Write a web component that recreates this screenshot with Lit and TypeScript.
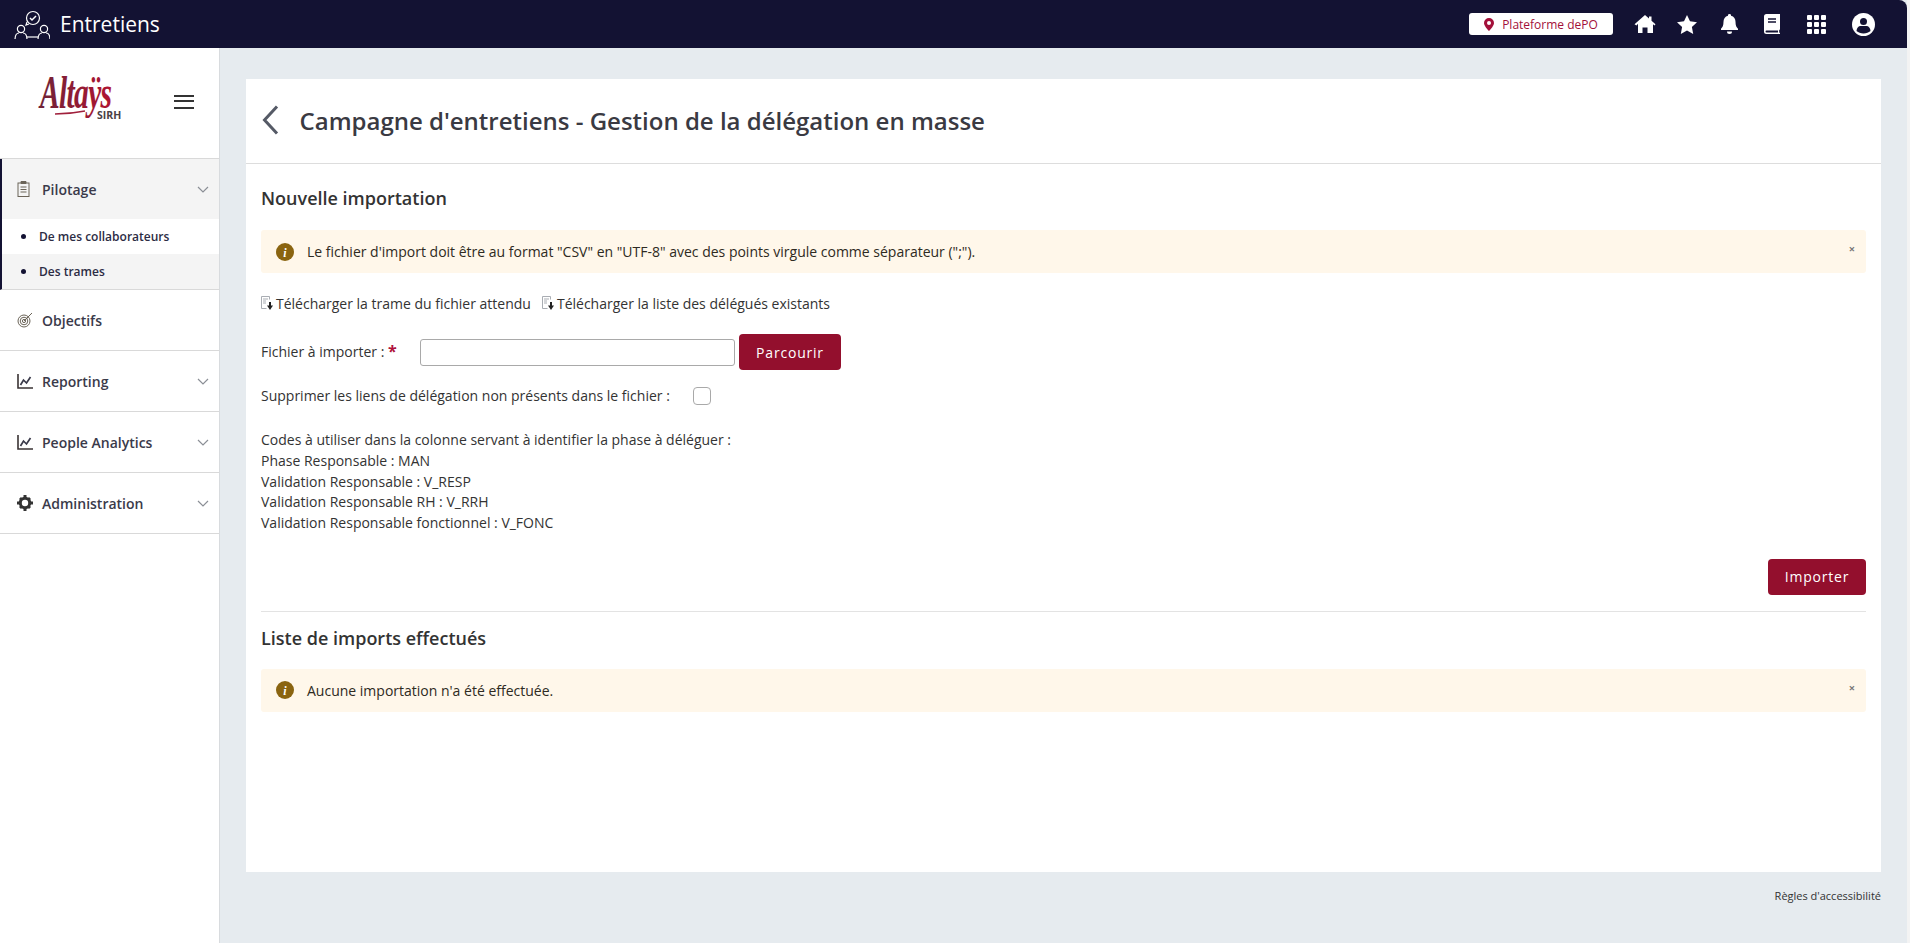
import { LitElement, html, css, svg } from "lit";
import { customElement } from "lit/decorators.js";

const chevron = html`<svg class="chev" viewBox="0 0 12 7" width="12" height="7"><path d="M1 1l5 5 5-5" fill="none" stroke="#8b8f96" stroke-width="1.2"/></svg>`;
const chart = html`<svg class="ico" viewBox="0 0 16 16" width="16" height="16"><path d="M1 1v14h15" fill="none" stroke="#3a3334" stroke-width="1.6"/><path d="M3.500 12l3-5 3 3 4-6" fill="none" stroke="#3a3a4a" stroke-width="1.700"/></svg>`;
const docDown = html`<svg class="dl" viewBox="0 0 12 14" width="12" height="14"><path d="M.5.5h8v3M.5.5v12h5" fill="none" stroke="#a9adb3"/><path d="M2 3h5M2 5h3M2 7h3" stroke="#a9adb3"/><path d="M9 6v5" stroke="#222" stroke-width="2"/><path d="M6 9.500h6L9 14z" fill="#222"/></svg>`;
const info = html`<svg class="info" viewBox="0 0 18 18" width="18" height="18"><circle cx="9" cy="9" r="9" fill="#8a6410"/><text x="9" y="13.500" text-anchor="middle" class="i">i</text></svg>`;

@customElement("app-root")
export class AppRoot extends LitElement {
  static styles = css`
    :host { display: flex; width: 1910px; height: 943px; overflow: hidden; background: #e6ebef; font-family: "Open Sans", sans-serif; color: #333; font-size: 14px; }
    .page { width: 1907px; flex: none; }
    .strip { flex: 1; background: #f3f3f3; }
    .top { height: 48px; background: #131233; border-top-right-radius: 8px; display: flex; align-items: center; padding: 0 0 0 14px; box-sizing: border-box; color: #fff; }
    .top .brand { font-size: 21px; margin-left: 10px; flex: 1; line-height: 48px; }
    .chip { width: 144px; height: 22px; background: #fff; border-radius: 3px; color: #a3103a; font-size: 12px; display: flex; align-items: center; justify-content: center; gap: 8px; margin-right: 11px; }
    .ticons { display: flex; align-items: center; margin-right: 20px; }
    .ticons span { display: flex; width: 42px; justify-content: center; }
    .ticons span.w43 { width: 43px; }
    .ticons span.w46 { width: 46px; }
    .ticons span.w48 { width: 48px; }
    .main { display: flex; height: 895px; }
    .side { width: 219px; background: #fff; border-right: 1px solid #d8dbde; flex: none; }
    .logo { height: 111px; box-sizing: border-box; border-bottom: 1px solid #d9d9d9; position: relative; }
    .lg { position: absolute; left: 38px; top: 8px; }
    .burger { position: absolute; left: 174px; top: 47px; width: 20px; height: 14px; border-top: 2px solid #333; border-bottom: 2px solid #333; box-sizing: border-box; }
    .burger::after { content: ""; display: block; height: 2px; background: #333; margin-top: 3px; }
    .group { border-bottom: 1px solid #d9d9d9; border-left: 2px solid #131233; }
    .item { height: 60px; display: flex; align-items: center; box-sizing: border-box; padding-left: 17px; padding-right: 10px; font-weight: 600; font-size: 14px; color: #3a3a4a; }
    .item.rule { border-bottom: 1px solid #d9d9d9; height: 61px; }
    .group .item { background: #f4f4f4; padding-left: 15px; }
    .item .lab { flex: 1; }
    .item .slot { width: 25px; display: flex; }
    .sub { height: 35px; display: flex; align-items: center; padding-left: 19px; font-size: 12px; font-weight: 600; color: #2c2c44; gap: 13px; }
    .sub i { width: 5px; height: 5px; border-radius: 50%; background: #131233; }
    .sub.alt2 { background: #f4f4f4; }
    .content { flex: 1; padding: 31px 26px 0 26px; min-width: 0; }
    .card { height: 793px; background: #fff; }
    .head { height: 85px; border-bottom: 1px solid #ddd; box-sizing: border-box; display: flex; align-items: center; padding-left: 16px; padding-bottom: 2px; }
    .head h1 { margin: 0 0 0 20.5px; font-size: 24px; font-weight: 600; color: #3a3a42; }
    .body { padding: 21px 15px 0; }
    h2 { margin: 0; font-size: 18px; font-weight: 600; color: #333; line-height: 26px; }
    .alert { height: 43px; background: #fff7ea; border-radius: 3px; display: flex; align-items: center; padding: 0 11px 0 15px; color: #2e2a22; margin-top: 19px; }
    .alert .msg { flex: 1; margin-left: 13px; }
    .close { font-size: 11px; color: #777; font-weight: 700; margin-top: -6px; line-height: 1; }
    .links { display: flex; margin-top: 20px; gap: 11px; height: 20px; align-items: center; }
    .links a { display: flex; align-items: center; color: #333; }
    .dl { margin-right: 3px; }
    .row { display: flex; align-items: center; margin-top: 21px; }
    .row label { width: 159px; position: relative; top: -1px; }
    .req { color: #b0123b; font-weight: 700; font-size: 16px; }
    .input { width: 315px; height: 27px; box-sizing: border-box; border: 1px solid #a9a9a9; border-radius: 3px; background: #fff; }
    .btn { background: #930f2d; color: #fff; border-radius: 4px; height: 36px; display: flex; align-items: center; justify-content: center; font-weight: 500; letter-spacing: .8px; }
    .browse { width: 102px; margin-left: 4px; }
    .chk-row { display: flex; align-items: center; margin-top: 16px; }
    .chk { width: 18px; height: 18px; box-sizing: border-box; border: 1px solid #a9a9a9; border-radius: 4px; margin-left: 23px; }
    .codes { margin-top: 25px; line-height: 20.8px; }
    .actions { display: flex; justify-content: flex-end; margin-top: 25px; }
    .imp { width: 98px; }
    .sep { border-top: 1px solid #e3e3e3; margin-top: 16px; }
    .sep + h2 { margin-top: 13px; }
    .alert.two { margin-top: 18px; }
    .foot { text-align: right; font-size: 11px; color: #333; margin-top: 16px; line-height: 15px; }
    svg text.i { font: italic 700 12px "Liberation Serif", serif; fill: #fff; }
    svg text.wm { font: italic 700 46px "Liberation Serif", serif; letter-spacing: -1px; }
    svg text.sr { font: 700 10.5px "Open Sans", sans-serif; fill: #4a4146; }
  `;

  render() {
    return html`
      <div class="page">
      <div class="top">
        <svg width="36" height="30" viewBox="0 0 36 30" fill="none" stroke="#fff" stroke-width="1.2">
          <circle cx="19" cy="9" r="6.500"/><path d="M13 13l-1 3 3-1"/><path d="M16 9l2 2 4-4" stroke-width="1.500"/>
          <circle cx="7" cy="20" r="3.600"/><path d="M1 31c0-5 2-7 4-7M13 31c0-5-2-7-4-7"/>
          <circle cx="30" cy="20" r="3.600"/><path d="M24 31c0-5 2-7 4-7M36 31c0-5-2-7-4-7"/><path d="M13 28h11"/>
        </svg>
        <div class="brand">Entretiens</div>
        <div class="chip">
          <svg width="10" height="13" viewBox="0 0 10 13"><path fill-rule="evenodd" fill="#a3103a" d="M5 0a5 5 0 0 1 5 5c0 2.500-3 6-5 8-2-2-5-5.500-5-8a5 5 0 0 1 5-5zm0 3a2 2 0 1 0 0 4 2 2 0 0 0 0-4z"/></svg>
          <span>Plateforme dePO</span>
        </div>
        <div class="ticons">
          <span><svg width="22" height="18" viewBox="0 0 21 18" fill="#fff"><path d="M10.500 0l4 3.500V1.500h2.500v4.200l4 3.500-1 1.300-1.500-1.200V18h-5.500v-5.500h-5V18H3.500V8.800L2 10.500 0 9.200z"/></svg></span>
          <span><svg width="20" height="19" viewBox="0 0 20 19" fill="#fff"><path d="M10 0l3 6.300 7 .9-5.100 4.800 1.300 7L10 15.600 3.800 19l1.300-7L0 7.200l7-.9z"/></svg></span>
          <span class="w43"><svg width="17" height="20" viewBox="0 0 17 20" fill="#fff"><path d="M8.500 0a1.500 1.500 0 0 1 1.500 1.700c3 .7 4.500 3 4.500 6 0 4 1 5.500 2.500 7V16H0v-1.300c1.500-1.500 2.500-3 2.500-7 0-3 1.500-5.300 4.500-6A1.500 1.500 0 0 1 8.500 0z"/><path d="M6 17.500h5a2.500 2.500 0 0 1-5 0z"/></svg></span>
          <span><svg width="16" height="20" viewBox="0 0 16 20"><path fill="#fff" d="M2.500 0H16v15.500l-.8.500v2.500l.8.500v1H2.500A2.500 2.500 0 0 1 0 17.500v-15A2.500 2.500 0 0 1 2.500 0z"/><path d="M4 5h8M4 8h8" stroke="#131233" stroke-width="1.500"/><path d="M2.500 16.500H14v2H2.500a1 1 0 0 1 0-2z" fill="#131233"/></svg></span>
          <span class="w46"><svg width="19" height="19" viewBox="0 0 19 19" fill="#fff">${[0, 7, 14].flatMap(x => [0, 7, 14].map(y => svg`<rect x=${x} y=${y} width="5" height="5" rx="1"/>`))}</svg></span>
          <span class="w48"><svg width="23" height="23" viewBox="0 0 23 23"><circle cx="11.500" cy="11.500" r="11.500" fill="#fff"/><circle cx="11.500" cy="8.500" r="3.500" fill="#131233"/><path d="M4.500 18c0-3 2-5 4-5h6c2 0 4 2 4 5-2 1.500-4 2.500-7 2.500s-5-1-7-2.500z" fill="#131233"/></svg></span>
        </div>
      </div>
      <div class="main">
        <nav class="side">
          <div class="logo">
            <svg class="lg" width="92" height="90" viewBox="0 -16 92 90">
              <defs><linearGradient id="lgr" x1="0" x2="1" y1="0" y2="0"><stop offset="0" stop-color="#6e2338"/><stop offset="1" stop-color="#b01432"/></linearGradient></defs>
              <text class="wm" transform="translate(2 36) scale(.64 1)" fill="url(#lgr)">Altaÿs</text>
              <path d="M17 42q15 0 30-3" fill="none" stroke="#a0203c" stroke-width="1.500"/>
              <text class="sr" x="59" y="47">SIRH</text>
            </svg>
            <div class="burger"></div>
          </div>
          <div class="group">
            <div class="item"><span class="slot"><svg width="13" height="16" viewBox="0 0 13 16" fill="none" stroke="#6b6458"><rect x="1" y="2" width="11" height="13.500"/><path d="M3.500 6h6M3.500 8.500h6M3.500 11h6"/><path d="M4 .5h5v2H4z" fill="#6b6458"/></svg></span><span class="lab">Pilotage</span>${chevron}</div>
            <div class="sub"><i></i>De mes collaborateurs</div>
            <div class="sub alt2"><i></i>Des trames</div>
          </div>
          <div class="item rule"><span class="slot"><svg width="16" height="16" viewBox="0 0 16 16" fill="none" stroke="#6b6458"><circle cx="7" cy="9" r="6"/><circle cx="7" cy="9" r="3.800"/><circle cx="7" cy="9" r="1.600"/><path d="M7 9l8-8"/></svg></span><span class="lab">Objectifs</span></div>
          <div class="item rule"><span class="slot">${chart}</span><span class="lab">Reporting</span>${chevron}</div>
          <div class="item rule"><span class="slot">${chart}</span><span class="lab">People Analytics</span>${chevron}</div>
          <div class="item rule"><span class="slot"><svg width="16" height="16" viewBox="0 0 16 16"><circle cx="8" cy="8" r="4.700" fill="none" stroke="#333" stroke-width="3"/><path d="M6.500 0h3v3h-3zM6.500 13h3v3h-3zM0 6.500h3v3H0zM13 6.500h3v3h-3zM2 4l2-2 2 2-2 2zM10 4l2-2 2 2-2 2zM2 12l2-2 2 2-2 2zM10 12l2-2 2 2-2 2z" fill="#333"/></svg></span><span class="lab">Administration</span>${chevron}</div>
        </nav>
        <div class="content">
          <div class="card">
            <div class="head">
              <svg width="17" height="30" viewBox="0 0 17 30"><path d="M15 1.500L2.500 15 15 28.500" fill="none" stroke="#555a66" stroke-width="3"/></svg>
              <h1>Campagne d'entretiens - Gestion de la délégation en masse</h1>
            </div>
            <div class="body">
              <h2>Nouvelle importation</h2>
              <div class="alert">${info}<span class="msg">Le fichier d'import doit être au format "CSV" en "UTF-8" avec des points virgule comme séparateur (";").</span><span class="close">×</span></div>
              <div class="links"><a>${docDown}Télécharger la trame du fichier attendu</a><a>${docDown}Télécharger la liste des délégués existants</a></div>
              <div class="row"><label>Fichier à importer : <span class="req">*</span></label><div class="input"></div><div class="btn browse">Parcourir</div></div>
              <div class="chk-row"><span>Supprimer les liens de délégation non présents dans le fichier :</span><div class="chk"></div></div>
              <div class="codes">Codes à utiliser dans la colonne servant à identifier la phase à déléguer :<br>Phase Responsable : MAN<br>Validation Responsable : V_RESP<br>Validation Responsable RH : V_RRH<br>Validation Responsable fonctionnel : V_FONC</div>
              <div class="actions"><div class="btn imp">Importer</div></div>
              <div class="sep"></div>
              <h2>Liste de imports effectués</h2>
              <div class="alert two">${info}<span class="msg">Aucune importation n'a été effectuée.</span><span class="close">×</span></div>
            </div>
          </div>
          <div class="foot">Règles d'accessibilité</div>
        </div>
      </div>
      </div>
      <div class="strip"></div>
    `;
  }
}
